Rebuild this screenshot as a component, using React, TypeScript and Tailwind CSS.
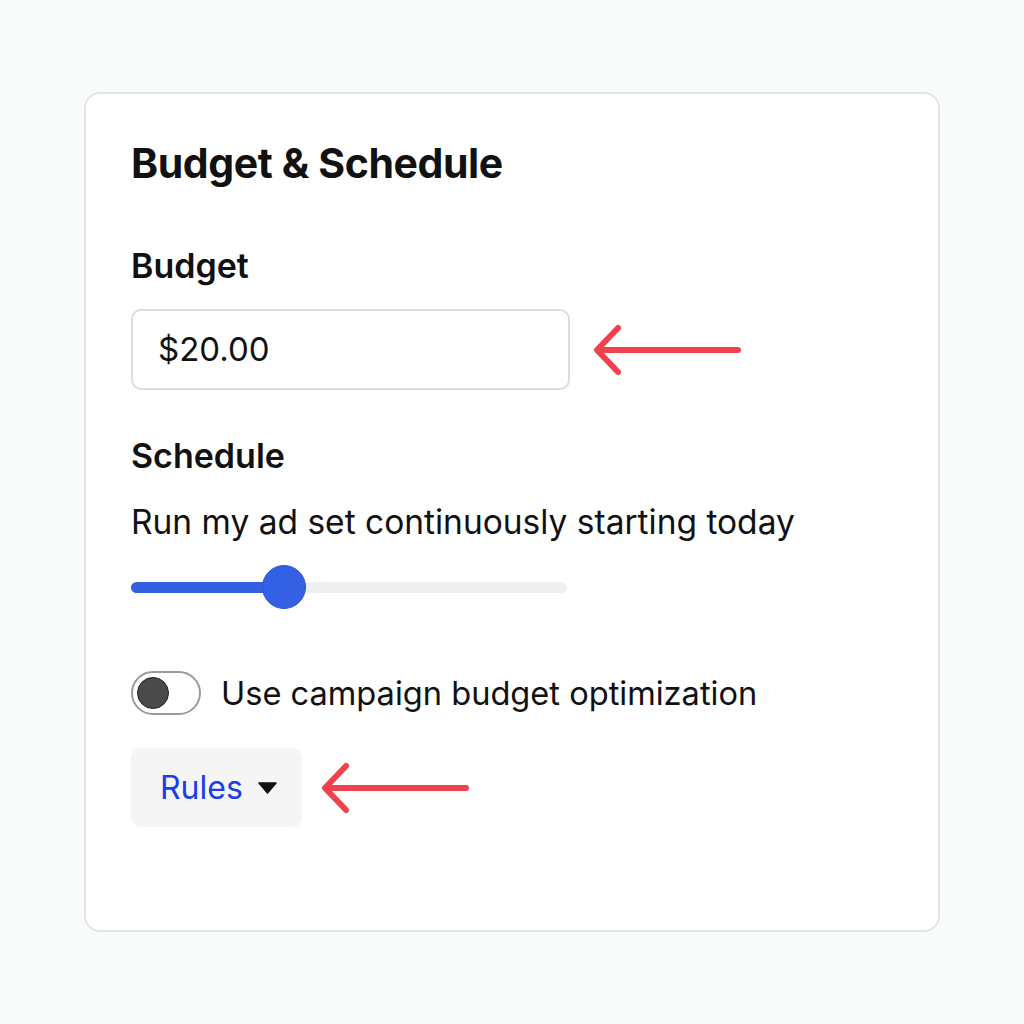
import React from "react";

function Arrow({ width }: { width: number }) {
  return (
    <svg width={width} height={60} viewBox={`0 0 ${width} 60`} fill="none">
      <path
        d={`M${width - 4} 30 H6 M26 8 L5 30 L26 52`}
        stroke="#f0424d"
        strokeWidth={6}
        strokeLinecap="round"
        strokeLinejoin="round"
      />
    </svg>
  );
}

export default function App() {
  return (
    <div
      className="w-[1024px] h-[1024px] bg-[#f9fafa] pt-[92px] pl-[84px]"
      style={{ fontFamily: "Inter, 'Noto Sans', sans-serif" }}
    >
      <div className="w-[856px] h-[840px] bg-white border-2 border-[#e1e4e7] rounded-[16px] pl-[45px] pt-[44px] text-[#111]">
        <h1 className="text-[41px] leading-[50px] font-bold tracking-[-0.4px]">Budget &amp; Schedule</h1>

        <div className="mt-[58px] text-[34px] leading-[40px] font-semibold">Budget</div>
        <div className="mt-[23px] flex items-center gap-[22px]">
          <div className="w-[439px] h-[81px] border-2 border-[#d9dee2] rounded-[10px] flex items-center pl-[25px] text-[33px] text-[#111]">
            $20.00
          </div>
          <Arrow width={150} />
        </div>

        <div className="mt-[46px] text-[34px] leading-[40px] font-semibold">Schedule</div>
        <div className="mt-[26px] text-[33.5px] leading-[40px]">Run my ad set continuously starting today</div>

        <div className="mt-[23px] relative w-[436px] h-[44px] flex items-center">
          <div className="w-full h-[11px] rounded-full bg-[#eeeff1]" />
          <div className="absolute left-0 top-[17px] w-[152px] h-[11px] rounded-full bg-[#3360e3]" />
          <div className="absolute left-[131px] top-0 w-[44px] h-[44px] rounded-full bg-[#3461e4] border border-[#2d55d0]" />
        </div>

        <div className="mt-[62px] flex items-center gap-[20px]">
          <div className="w-[70px] h-[44px] rounded-full border-2 border-[#9a9a9a] bg-white flex items-center pl-[4px]">
            <div className="w-[32px] h-[32px] rounded-full bg-[#4a4a4a] border border-[#222]" />
          </div>
          <div className="text-[32.6px] leading-[40px]">Use campaign budget optimization</div>
        </div>

        <div className="mt-[33px] flex items-center gap-[18px]">
          <div className="w-[171px] h-[79px] rounded-[10px] bg-[#f5f5f5] flex items-center pl-[29px] gap-[15px]">
            <span className="text-[32px] text-[#1a3ee6]">Rules</span>
            <svg width="19" height="12" viewBox="0 0 19 12">
              <path d="M1 1 H18 L9.5 11 Z" fill="#111" stroke="#111" strokeWidth="1.5" strokeLinejoin="round" />
            </svg>
          </div>
          <Arrow width={150} />
        </div>
      </div>
    </div>
  );
}
